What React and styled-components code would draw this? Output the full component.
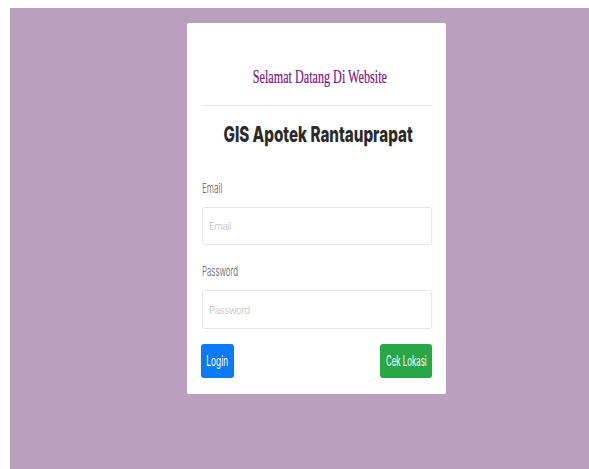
import React from "react";
import styled, { createGlobalStyle } from "styled-components";

const Global = createGlobalStyle`
  html, body { margin: 0; padding: 0; background: #ffffff; }
  body { margin: 8px 0 0 10px; overflow: hidden; }
  * { box-sizing: border-box; }
`;

const Page = styled.main`
  min-height: 100vh;
  background: #b9a0bd;
  padding: 15px 0 0 177px;
`;

const Card = styled.section`
  width: 259px;
  height: 371px;
  background: #ffffff;
  border-radius: 2px;
  padding: 43px 14px 16px 15px;
  display: flex;
  flex-direction: column;
`;

/* Narrow type: the face is squeezed horizontally around its origin */
const Narrow = styled.span`
  display: inline-block;
  flex: none;
  white-space: nowrap;
  transform: scaleX(${(p) => p.$k});
  transform-origin: ${(p) => p.$origin || "left"} center;
`;

const Welcome = styled.h2`
  margin: 0;
  display: flex;
  justify-content: center;
  font-family: "Liberation Serif", "DejaVu Serif", serif;
  font-weight: 400;
  font-size: 19px;
  line-height: 22px;
  color: #7e1384;
  padding-left: 5px;
  -webkit-text-stroke: 0.2px #7e1384;
`;

const Divider = styled.hr`
  margin: 17px 0 0;
  border: 0;
  border-top: 1px solid #e6e6e6;
  height: 0;
`;

const Title = styled.h1`
  margin: 15px 0 0;
  display: flex;
  justify-content: center;
  font-family: Inter, "Open Sans", sans-serif;
  font-weight: 800;
  font-size: 22px;
  line-height: 27px;
  color: #2b2b2b;
  padding-left: 2px;
`;

const Form = styled.form`
  display: flex;
  flex-direction: column;
  margin-top: 31px;
`;

const Field = styled.div`
  display: flex;
  flex-direction: column;
  gap: 10px;
  & + & { margin-top: 17px; }
`;

const Label = styled.label`
  font-family: Inter, "Open Sans", sans-serif;
  font-weight: 300;
  font-size: 13px;
  line-height: 18px;
  color: #555555;
`;

const Input = styled.input`
  width: 230px;
  height: ${(p) => p.$h}px;
  border: 1px solid #e6e6e6;
  border-radius: 3px;
  padding: 0 6px;
  background: #ffffff;
  font-family: Inter, "Open Sans", sans-serif;
  font-weight: 300;
  font-size: 10px;
  letter-spacing: -0.6px;
  color: #444;
  outline: none;
  &::placeholder { color: #c2c2c2; }
`;

const Actions = styled.div`
  display: flex;
  justify-content: space-between;
  margin-top: 15px;
  margin-left: -1px;
`;

const Button = styled.button`
  width: ${(p) => p.$w}px;
  height: 34px;
  border: 0;
  border-radius: 3px;
  padding: 0;
  display: flex;
  align-items: center;
  justify-content: center;
  background: ${(p) => p.$bg};
  color: #ffffff;
  font-family: Inter, "Open Sans", sans-serif;
  font-weight: 400;
  font-size: 14px;
  line-height: 18px;
  overflow: visible;
  cursor: pointer;
`;

export default function App() {
  return (
    <>
      <Global />
      <Page>
        <Card>
          <Welcome>
            <Narrow $k={0.64} $origin="center">Selamat Datang Di Website</Narrow>
          </Welcome>
          <Divider />
          <Title>
            <Narrow $k={0.69} $origin="center">GIS Apotek Rantauprapat</Narrow>
          </Title>
          <Form onSubmit={(e) => e.preventDefault()}>
            <Field>
              <Label htmlFor="email">
                <Narrow $k={0.63}>Email</Narrow>
              </Label>
              <Input id="email" type="email" placeholder="Email" $h={38} />
            </Field>
            <Field>
              <Label htmlFor="password">
                <Narrow $k={0.61}>Password</Narrow>
              </Label>
              <Input id="password" type="password" placeholder="Password" $h={39} />
            </Field>
            <Actions>
              <Button type="submit" $w={33} $bg="#0b7bf5">
                <Narrow $k={0.6} $origin="center">Login</Narrow>
              </Button>
              <Button type="button" $w={52} $bg="#27a745">
                <Narrow $k={0.56} $origin="center">Cek Lokasi</Narrow>
              </Button>
            </Actions>
          </Form>
        </Card>
      </Page>
    </>
  );
}
